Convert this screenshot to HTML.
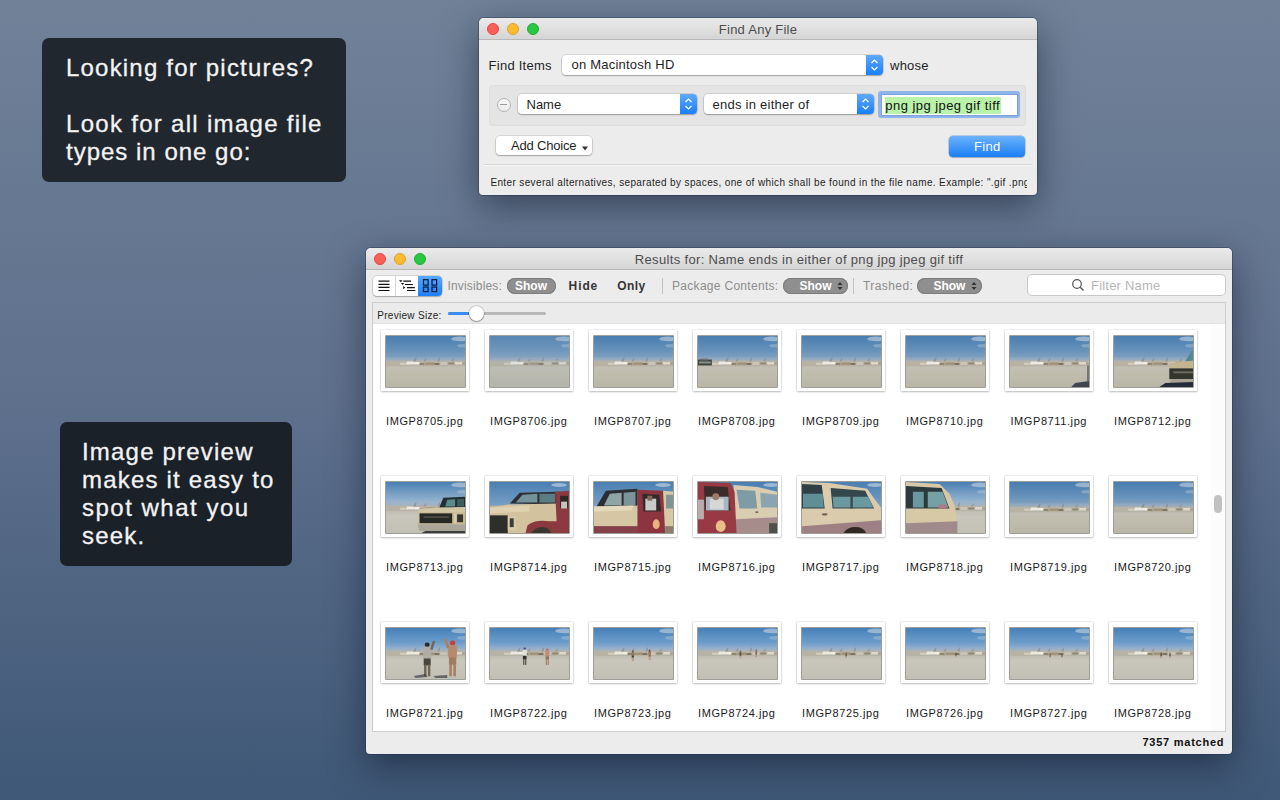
<!DOCTYPE html>
<html><head><meta charset="utf-8">
<style>
*{margin:0;padding:0;box-sizing:border-box}
html,body{width:1280px;height:800px;overflow:hidden}
body{position:relative;font-family:"Liberation Sans",sans-serif;background:linear-gradient(180deg,#708198 0%,#5e708c 50%,#3f5877 100%)}
.a{position:absolute}
.t{position:absolute;white-space:nowrap;line-height:1}
.callout{position:absolute;background:#21272e;border-radius:7px;color:#f4f4f4;font-size:24px;letter-spacing:1px}
.callout .t{color:#f2f2f2}
.win{position:absolute;background:#ececec;border-radius:5px 5px 4px 4px;box-shadow:0 0 0 1px rgba(30,40,60,.35),0 12px 36px rgba(10,18,35,.5)}
.tb{position:absolute;left:0;top:0;right:0;height:22px;border-radius:5px 5px 0 0;background:linear-gradient(#ebebeb,#d5d5d5);border-bottom:1px solid #b8b8b8}
.tl{position:absolute;width:12px;height:12px;border-radius:50%}
.r{background:#fc5f57;border:1px solid #df4744}
.y{background:#fdbc2e;border:1px solid #de9f34}
.g{background:#28c840;border:1px solid #27aa35}
.popup{position:absolute;background:#fff;border-radius:4px;box-shadow:0 0 0 .5px rgba(0,0,0,.18),0 1px 1.5px rgba(0,0,0,.25)}
.step{position:absolute;top:0;bottom:0;right:0;width:17px;background:linear-gradient(#5fa9fd,#1a7efb);border-radius:0 4px 4px 0}
</style></head><body>

<!-- callout 1 -->
<div class="callout" style="left:42px;top:38px;width:304px;height:144px"></div>
<div class="t" style="left:66px;top:56px;font-size:24px;letter-spacing:1.2px;color:#f3f3f3;-webkit-text-stroke:.3px #f3f3f3">Looking for pictures?</div>
<div class="t" style="left:66px;top:111.5px;font-size:24px;letter-spacing:1.3px;color:#f3f3f3;-webkit-text-stroke:.3px #f3f3f3">Look for all image file</div>
<div class="t" style="left:66px;top:140.3px;font-size:24px;letter-spacing:1px;color:#f3f3f3;-webkit-text-stroke:.3px #f3f3f3">types in one go:</div>

<!-- callout 2 -->
<div class="callout" style="left:60px;top:422px;width:232px;height:144px;background:#1b2129"></div>
<div class="t" style="left:82px;top:440px;font-size:24px;letter-spacing:1.2px;color:#f3f3f3;-webkit-text-stroke:.3px #f3f3f3">Image preview</div>
<div class="t" style="left:82px;top:468px;font-size:24px;letter-spacing:1.2px;color:#f3f3f3;-webkit-text-stroke:.3px #f3f3f3">makes it easy to</div>
<div class="t" style="left:82px;top:496px;font-size:24px;letter-spacing:1.5px;color:#f3f3f3;-webkit-text-stroke:.3px #f3f3f3">spot what you</div>
<div class="t" style="left:82px;top:524px;font-size:24px;letter-spacing:1.2px;color:#f3f3f3;-webkit-text-stroke:.3px #f3f3f3">seek.</div>

<!-- WINDOW 1 -->
<div class="win" id="w1" style="left:479px;top:18px;width:558px;height:177px">
  <div class="tb"></div>
  <div class="tl r" style="left:8px;top:5px"></div>
  <div class="tl y" style="left:28px;top:5px"></div>
  <div class="tl g" style="left:48px;top:5px"></div>
  <div class="t" style="left:0;width:558px;text-align:center;top:4.8px;font-size:13px;letter-spacing:.25px;color:#4d4d4d">Find Any File</div>
</div>


<!-- W1 content -->
<div class="t" style="left:488.6px;top:58.5px;font-size:13px;letter-spacing:.25px;color:#1f1f1f">Find Items</div>
<div class="popup" style="left:562px;top:54.5px;width:321px;height:20px"><div class="step"><svg width="17" height="20" style="position:absolute;left:0;top:0"><path d="M5.5 8 L8.5 5 L11.5 8 M5.5 12 L8.5 15 L11.5 12" fill="none" stroke="#fff" stroke-width="1.2"/></svg></div></div>
<div class="t" style="left:571.5px;top:58px;font-size:13px;letter-spacing:.22px;color:#1f1f1f">on Macintosh HD</div>
<div class="t" style="left:890px;top:58.8px;font-size:13px;letter-spacing:.25px;color:#1f1f1f">whose</div>
<div class="a" style="left:489px;top:85px;width:537px;height:41px;background:#e4e4e4;border:1px solid #dedede;border-radius:3px"></div>
<div class="a" style="left:496.7px;top:97.5px;width:14px;height:14px;border-radius:50%;border:1px solid #b4b4b4;background:linear-gradient(#f8f8f8,#ececec)"><div class="a" style="left:2.5px;top:5.6px;width:7px;height:1.4px;background:#999"></div></div>
<div class="popup" style="left:518px;top:94px;width:179px;height:20px"><div class="step"><svg width="17" height="20" style="position:absolute;left:0;top:0"><path d="M5.5 8 L8.5 5 L11.5 8 M5.5 12 L8.5 15 L11.5 12" fill="none" stroke="#fff" stroke-width="1.2"/></svg></div></div>
<div class="t" style="left:526.5px;top:97.5px;font-size:13px;color:#1f1f1f">Name</div>
<div class="popup" style="left:704px;top:94px;width:170px;height:20px"><div class="step"><svg width="17" height="20" style="position:absolute;left:0;top:0"><path d="M5.5 8 L8.5 5 L11.5 8 M5.5 12 L8.5 15 L11.5 12" fill="none" stroke="#fff" stroke-width="1.2"/></svg></div></div>
<div class="t" style="left:712.5px;top:97.5px;font-size:13px;letter-spacing:.26px;color:#1f1f1f">ends in either of</div>
<div class="a" style="left:878px;top:91px;width:142px;height:27px;border-radius:3px;background:#8fb4ec"></div>
<div class="a" style="left:882px;top:95px;width:135px;height:20px;background:#fff;box-shadow:0 0 0 .5px #6d8fc4"></div>
<div class="a" style="left:884.5px;top:96.5px;width:116.5px;height:17px;background:#b9f2a9"></div>
<div class="t" style="left:885.3px;top:98.7px;font-size:13px;letter-spacing:.45px;color:#111">png jpg jpeg gif tiff</div>
<div class="popup" style="left:496px;top:136px;width:96px;height:19px"></div>
<div class="t" style="left:511px;top:138.5px;font-size:13px;letter-spacing:-.2px;color:#1f1f1f">Add Choice</div>
<svg class="a" style="left:580px;top:144px" width="10" height="8"><path d="M2 2.5 L8 2.5 L5 6.5 Z" fill="#333"/></svg>
<div class="a" style="left:949px;top:136px;width:76px;height:21px;border-radius:4px;background:linear-gradient(#6cb3fa,#1b7ef6);box-shadow:0 0 0 .5px rgba(0,60,180,.4),0 1px 1px rgba(0,0,0,.15)"></div>
<div class="t" style="left:974px;top:140.4px;font-size:13px;letter-spacing:.35px;color:#fff">Find</div>
<div class="a" style="left:484px;top:164px;width:548px;height:1px;background:#d6d6d6"></div>
<div class="a" style="left:484px;top:165px;width:548px;height:1px;background:#f5f5f5"></div>
<div class="a" style="left:490px;top:176px;width:537px;height:14px;overflow:hidden"><div class="t" style="left:0.4px;top:2px;font-size:10px;letter-spacing:.37px;color:#1f1f1f">Enter several alternatives, separated by spaces, one of which shall be found in the file name. Example: ".gif .png"</div></div>

<!-- WINDOW 2 -->
<div class="win" id="w2" style="left:366px;top:248px;width:866px;height:506px">
  <div class="tb"></div>
  <div class="tl r" style="left:8px;top:5px"></div>
  <div class="tl y" style="left:28px;top:5px"></div>
  <div class="tl g" style="left:48px;top:5px"></div>
  <div class="t" style="left:0;width:866px;text-align:center;top:4.9px;font-size:13px;letter-spacing:.34px;color:#4d4d4d">Results for: Name ends in either of png jpg jpeg gif tiff</div>
</div>


<!-- W2 content -->
<div class="a" style="left:373px;top:276px;width:69px;height:20px;border-radius:4px;background:#fff;box-shadow:0 0 0 .5px rgba(0,0,0,.2),0 1px 1.5px rgba(0,0,0,.22);overflow:hidden">
  <div class="a" style="left:22px;top:0;width:1px;height:20px;background:#d4d4d4"></div>
  <div class="a" style="left:45px;top:0;width:24px;height:20px;background:linear-gradient(#5aa8fd,#1b7ffb)"></div>
</div>
<svg class="a" style="left:373px;top:276px" width="69" height="20">
  <path d="M5.5 5.2h11M5.5 8.3h11M5.5 11.4h11M5.5 14.5h11" stroke="#111" stroke-width="1.2"/>
  <path d="M26 4.3h3.6l-1.8 1.9z M28 7h3.2l-1.6 1.9z M30.2 10v3.2l2 -1.6z" fill="#111"/>
  <path d="M30.3 5.2h7.7M32 8.5h7.8M34 11.6h7.8M34 14.5h8.4" stroke="#111" stroke-width="1.2"/>
  <rect x="50.5" y="3.7" width="4.6" height="5.4" fill="none" stroke="#0b1736" stroke-width="1.2"/>
  <rect x="59" y="3.7" width="4.6" height="5.4" fill="none" stroke="#0b1736" stroke-width="1.2"/>
  <rect x="50.5" y="11" width="4.6" height="4.6" fill="none" stroke="#0b1736" stroke-width="1.2"/>
  <rect x="59" y="11" width="4.6" height="4.6" fill="none" stroke="#0b1736" stroke-width="1.2"/>
</svg>
<div class="t" style="left:447.5px;top:279.5px;font-size:12px;letter-spacing:.16px;color:#8d8d8d">Invisibles:</div>
<div class="a" style="left:507px;top:278px;width:49px;height:16px;border-radius:8px;background:#8f8f8f;box-shadow:inset 0 0 0 1px #7c7c7c"></div>
<div class="t" style="left:515px;top:279.5px;font-size:12px;font-weight:bold;color:#fff">Show</div>
<div class="t" style="left:568.6px;top:279.5px;font-size:12px;font-weight:bold;letter-spacing:.9px;color:#353535">Hide</div>
<div class="t" style="left:617.2px;top:279.5px;font-size:12px;font-weight:bold;letter-spacing:.4px;color:#353535">Only</div>
<div class="a" style="left:662px;top:278px;width:1px;height:16px;background:#c3c3c3"></div>
<div class="t" style="left:672px;top:279.5px;font-size:12px;letter-spacing:.3px;color:#8d8d8d">Package Contents:</div>
<div class="a" style="left:783px;top:278px;width:65px;height:16px;border-radius:8px;background:#8f8f8f;box-shadow:inset 0 0 0 1px #7c7c7c"></div>
<div class="t" style="left:799.5px;top:279.5px;font-size:12px;font-weight:bold;color:#fff">Show</div>
<svg class="a" style="left:836px;top:280px" width="8" height="12"><path d="M1.5 5L4 2L6.5 5Z M1.5 7L4 10L6.5 7Z" fill="#333"/></svg>
<div class="a" style="left:853px;top:278px;width:1px;height:16px;background:#c3c3c3"></div>
<div class="t" style="left:863px;top:279.5px;font-size:12px;letter-spacing:.42px;color:#8d8d8d">Trashed:</div>
<div class="a" style="left:917px;top:278px;width:65px;height:16px;border-radius:8px;background:#8f8f8f;box-shadow:inset 0 0 0 1px #7c7c7c"></div>
<div class="t" style="left:933.4px;top:279.5px;font-size:12px;font-weight:bold;color:#fff">Show</div>
<svg class="a" style="left:970px;top:280px" width="8" height="12"><path d="M1.5 5L4 2L6.5 5Z M1.5 7L4 10L6.5 7Z" fill="#333"/></svg>
<div class="a" style="left:1028px;top:275px;width:197px;height:20px;border-radius:4px;background:#fff;box-shadow:0 0 0 1px #c9c9c9"></div>
<svg class="a" style="left:1071px;top:278px" width="14" height="14"><circle cx="6" cy="6" r="4.3" fill="none" stroke="#555" stroke-width="1.2"/><path d="M9.2 9.2L12.5 12.5" stroke="#555" stroke-width="1.4"/></svg>
<div class="t" style="left:1091px;top:278.8px;font-size:13px;letter-spacing:.2px;color:#b6b6b6">Filter Name</div>
<!-- content box -->
<div class="a" style="left:373px;top:303px;width:852px;height:428px;background:#fff;box-shadow:0 0 0 1px #cdcdcd"></div>
<div class="a" style="left:373px;top:303px;width:852px;height:21px;background:#ebebeb;border-bottom:1px solid #e2e2e2"></div>
<div class="t" style="left:377.2px;top:311px;font-size:10px;letter-spacing:.3px;color:#262626">Preview Size:</div>
<div class="a" style="left:448px;top:312px;width:98px;height:3px;border-radius:1.5px;background:#b8b8b8"></div>
<div class="a" style="left:448px;top:312px;width:26px;height:3px;border-radius:1.5px;background:#3a8df6"></div>
<div class="a" style="left:469px;top:306px;width:15px;height:15px;border-radius:50%;background:#fff;box-shadow:0 0 0 .5px rgba(0,0,0,.25),0 1px 1.5px rgba(0,0,0,.3)"></div>
<div class="a" style="left:1211px;top:324px;width:14px;height:407px;background:#fcfcfc"></div>
<div class="a" style="left:1214px;top:495px;width:8px;height:18px;border-radius:4px;background:#c2c2c2"></div>
<div class="t" style="left:1142.5px;top:737px;font-size:11px;font-weight:bold;letter-spacing:.75px;color:#111">7357 matched</div>

<!-- GRID -->
<svg width="0" height="0" style="position:absolute"><defs>
<linearGradient id="sky" x1="0" y1="0" x2="0" y2="1"><stop offset="0" stop-color="#4a7db0"/><stop offset=".6" stop-color="#6893bb"/><stop offset="1" stop-color="#8ea8c2"/></linearGradient>
<linearGradient id="sky2" x1="0" y1="0" x2="0" y2="1"><stop offset="0" stop-color="#4a7fb3"/><stop offset=".5" stop-color="#7ba2c6"/><stop offset="1" stop-color="#a9bfd2"/></linearGradient>
<linearGradient id="sky3" x1="0" y1="0" x2="0" y2="1"><stop offset="0" stop-color="#4680b8"/><stop offset=".6" stop-color="#6a9cca"/><stop offset="1" stop-color="#a4b9d2"/></linearGradient>
<linearGradient id="gnd" x1="0" y1="0" x2="0" y2="1"><stop offset="0" stop-color="#c3bfb0"/><stop offset="1" stop-color="#b9b6a8"/></linearGradient>
<linearGradient id="gnd3" x1="0" y1="0" x2="0" y2="1"><stop offset="0" stop-color="#cac8bd"/><stop offset="1" stop-color="#c2c0b5"/></linearGradient>
</defs></svg>
<div class="a" style="left:380.5px;top:330px;width:88.5px;height:61px;background:#fff;box-shadow:0 0 0 .5px rgba(0,0,0,.12),0 1px 2px rgba(0,0,0,.22)"></div>
<svg class="a" style="left:385.5px;top:335.5px;box-shadow:0 0 0 .7px #74746e;filter:blur(.4px)" width="79" height="51" viewBox="0 0 80 52" preserveAspectRatio="none"><rect width="80" height="52" fill="url(#gnd)"/><rect width="80" height="26" fill="url(#sky)"/><ellipse cx="75" cy="3" rx="9" ry="2.4" fill="#dde5ec" opacity=".5"/><ellipse cx="77" cy="10" rx="5" ry="1.8" fill="#d8e0e8" opacity=".3"/><rect x="0" y="22" width="80" height="4" fill="#9fafc2" opacity=".55"/><rect x="0" y="25" width="80" height="6" fill="#b7b2a3"/><rect x="14" y="27" width="8" height="2.5" fill="#cfc9bc"/><rect x="21" y="26" width="8" height="3" fill="#ece9e2"/><rect x="29" y="26.5" width="5" height="2.5" fill="#f1eee8"/><rect x="34" y="27.5" width="5" height="2" fill="#8d8170"/><rect x="40" y="27" width="9" height="2.5" fill="#a3927a"/><rect x="49" y="27.5" width="5" height="2" fill="#7c7262"/><rect x="55" y="26.5" width="7" height="3" fill="#c9c3b8"/><rect x="63" y="27" width="6" height="2" fill="#8f8676"/><rect x="70" y="26.5" width="7" height="2.5" fill="#dcd8d0"/><rect x="77" y="27" width="3" height="2" fill="#a89e8e"/><path d="M27 26 l3 -4 l1 0 l-1 4Z M38 26 l2 -3 l1 0 l-1 3Z M52 26 l2 -4 l1 0 l-1 4Z M66 26 l2 -3 l1 0 l-1 3Z" fill="#6f6c68" opacity=".4"/><rect x="0" y="31" width="80" height="4" fill="#c3c2b8" opacity=".7"/><rect x="0" y="35" width="80" height="17" fill="url(#gnd)" opacity=".85"/></svg>
<div class="t" style="left:364.75px;width:120px;text-align:center;top:415.7px;font-size:11px;letter-spacing:.6px;color:#1a1a1a">IMGP8705.jpg</div>
<div class="a" style="left:484.5px;top:330px;width:88.5px;height:61px;background:#fff;box-shadow:0 0 0 .5px rgba(0,0,0,.12),0 1px 2px rgba(0,0,0,.22)"></div>
<svg class="a" style="left:489.5px;top:335.5px;box-shadow:0 0 0 .7px #74746e;filter:blur(.4px)" width="79" height="51" viewBox="0 0 80 52" preserveAspectRatio="none"><rect width="80" height="52" fill="url(#gnd)"/><rect width="80" height="26" fill="url(#sky)"/><ellipse cx="75" cy="3" rx="9" ry="2.4" fill="#dde5ec" opacity=".5"/><ellipse cx="77" cy="10" rx="5" ry="1.8" fill="#d8e0e8" opacity=".3"/><rect x="0" y="22" width="80" height="4" fill="#9fafc2" opacity=".55"/><rect x="0" y="25" width="80" height="6" fill="#b7b2a3"/><rect x="14" y="27" width="8" height="2.5" fill="#cfc9bc"/><rect x="21" y="26" width="8" height="3" fill="#ece9e2"/><rect x="29" y="26.5" width="5" height="2.5" fill="#f1eee8"/><rect x="34" y="27.5" width="5" height="2" fill="#8d8170"/><rect x="40" y="27" width="9" height="2.5" fill="#a3927a"/><rect x="49" y="27.5" width="5" height="2" fill="#7c7262"/><rect x="55" y="26.5" width="7" height="3" fill="#c9c3b8"/><rect x="63" y="27" width="6" height="2" fill="#8f8676"/><rect x="70" y="26.5" width="7" height="2.5" fill="#dcd8d0"/><rect x="77" y="27" width="3" height="2" fill="#a89e8e"/><path d="M27 26 l3 -4 l1 0 l-1 4Z M38 26 l2 -3 l1 0 l-1 3Z M52 26 l2 -4 l1 0 l-1 4Z M66 26 l2 -3 l1 0 l-1 3Z" fill="#6f6c68" opacity=".4"/><rect x="0" y="31" width="80" height="4" fill="#c3c2b8" opacity=".7"/><rect x="0" y="35" width="80" height="17" fill="url(#gnd)" opacity=".85"/><rect width="80" height="52" fill="#9fb0c0" opacity=".18"/></svg>
<div class="t" style="left:468.75px;width:120px;text-align:center;top:415.7px;font-size:11px;letter-spacing:.6px;color:#1a1a1a">IMGP8706.jpg</div>
<div class="a" style="left:588.5px;top:330px;width:88.5px;height:61px;background:#fff;box-shadow:0 0 0 .5px rgba(0,0,0,.12),0 1px 2px rgba(0,0,0,.22)"></div>
<svg class="a" style="left:593.5px;top:335.5px;box-shadow:0 0 0 .7px #74746e;filter:blur(.4px)" width="79" height="51" viewBox="0 0 80 52" preserveAspectRatio="none"><rect width="80" height="52" fill="url(#gnd)"/><rect width="80" height="26" fill="url(#sky)"/><ellipse cx="75" cy="3" rx="9" ry="2.4" fill="#dde5ec" opacity=".5"/><ellipse cx="77" cy="10" rx="5" ry="1.8" fill="#d8e0e8" opacity=".3"/><rect x="0" y="22" width="80" height="4" fill="#9fafc2" opacity=".55"/><rect x="0" y="25" width="80" height="6" fill="#b7b2a3"/><rect x="14" y="27" width="8" height="2.5" fill="#cfc9bc"/><rect x="21" y="26" width="8" height="3" fill="#ece9e2"/><rect x="29" y="26.5" width="5" height="2.5" fill="#f1eee8"/><rect x="34" y="27.5" width="5" height="2" fill="#8d8170"/><rect x="40" y="27" width="9" height="2.5" fill="#a3927a"/><rect x="49" y="27.5" width="5" height="2" fill="#7c7262"/><rect x="55" y="26.5" width="7" height="3" fill="#c9c3b8"/><rect x="63" y="27" width="6" height="2" fill="#8f8676"/><rect x="70" y="26.5" width="7" height="2.5" fill="#dcd8d0"/><rect x="77" y="27" width="3" height="2" fill="#a89e8e"/><path d="M27 26 l3 -4 l1 0 l-1 4Z M38 26 l2 -3 l1 0 l-1 3Z M52 26 l2 -4 l1 0 l-1 4Z M66 26 l2 -3 l1 0 l-1 3Z" fill="#6f6c68" opacity=".4"/><rect x="0" y="31" width="80" height="4" fill="#c3c2b8" opacity=".7"/><rect x="0" y="35" width="80" height="17" fill="url(#gnd)" opacity=".85"/></svg>
<div class="t" style="left:572.75px;width:120px;text-align:center;top:415.7px;font-size:11px;letter-spacing:.6px;color:#1a1a1a">IMGP8707.jpg</div>
<div class="a" style="left:692.5px;top:330px;width:88.5px;height:61px;background:#fff;box-shadow:0 0 0 .5px rgba(0,0,0,.12),0 1px 2px rgba(0,0,0,.22)"></div>
<svg class="a" style="left:697.5px;top:335.5px;box-shadow:0 0 0 .7px #74746e;filter:blur(.4px)" width="79" height="51" viewBox="0 0 80 52" preserveAspectRatio="none"><rect width="80" height="52" fill="url(#gnd)"/><rect width="80" height="26" fill="url(#sky)"/><ellipse cx="75" cy="3" rx="9" ry="2.4" fill="#dde5ec" opacity=".5"/><ellipse cx="77" cy="10" rx="5" ry="1.8" fill="#d8e0e8" opacity=".3"/><rect x="0" y="22" width="80" height="4" fill="#9fafc2" opacity=".55"/><rect x="0" y="25" width="80" height="6" fill="#b7b2a3"/><rect x="14" y="27" width="8" height="2.5" fill="#cfc9bc"/><rect x="21" y="26" width="8" height="3" fill="#ece9e2"/><rect x="29" y="26.5" width="5" height="2.5" fill="#f1eee8"/><rect x="34" y="27.5" width="5" height="2" fill="#8d8170"/><rect x="40" y="27" width="9" height="2.5" fill="#a3927a"/><rect x="49" y="27.5" width="5" height="2" fill="#7c7262"/><rect x="55" y="26.5" width="7" height="3" fill="#c9c3b8"/><rect x="63" y="27" width="6" height="2" fill="#8f8676"/><rect x="70" y="26.5" width="7" height="2.5" fill="#dcd8d0"/><rect x="77" y="27" width="3" height="2" fill="#a89e8e"/><path d="M27 26 l3 -4 l1 0 l-1 4Z M38 26 l2 -3 l1 0 l-1 3Z M52 26 l2 -4 l1 0 l-1 4Z M66 26 l2 -3 l1 0 l-1 3Z" fill="#6f6c68" opacity=".4"/><rect x="0" y="31" width="80" height="4" fill="#c3c2b8" opacity=".7"/><rect x="0" y="35" width="80" height="17" fill="url(#gnd)" opacity=".85"/><rect x="0" y="24" width="14" height="6" fill="#3e4440"/><rect x="2" y="23" width="8" height="2" fill="#6a7070"/><rect x="1" y="26" width="12" height="2" fill="#8a8e88"/></svg>
<div class="t" style="left:676.75px;width:120px;text-align:center;top:415.7px;font-size:11px;letter-spacing:.6px;color:#1a1a1a">IMGP8708.jpg</div>
<div class="a" style="left:796.5px;top:330px;width:88.5px;height:61px;background:#fff;box-shadow:0 0 0 .5px rgba(0,0,0,.12),0 1px 2px rgba(0,0,0,.22)"></div>
<svg class="a" style="left:801.5px;top:335.5px;box-shadow:0 0 0 .7px #74746e;filter:blur(.4px)" width="79" height="51" viewBox="0 0 80 52" preserveAspectRatio="none"><rect width="80" height="52" fill="url(#gnd)"/><rect width="80" height="26" fill="url(#sky)"/><ellipse cx="75" cy="3" rx="9" ry="2.4" fill="#dde5ec" opacity=".5"/><ellipse cx="77" cy="10" rx="5" ry="1.8" fill="#d8e0e8" opacity=".3"/><rect x="0" y="22" width="80" height="4" fill="#9fafc2" opacity=".55"/><rect x="0" y="25" width="80" height="6" fill="#b7b2a3"/><rect x="14" y="27" width="8" height="2.5" fill="#cfc9bc"/><rect x="21" y="26" width="8" height="3" fill="#ece9e2"/><rect x="29" y="26.5" width="5" height="2.5" fill="#f1eee8"/><rect x="34" y="27.5" width="5" height="2" fill="#8d8170"/><rect x="40" y="27" width="9" height="2.5" fill="#a3927a"/><rect x="49" y="27.5" width="5" height="2" fill="#7c7262"/><rect x="55" y="26.5" width="7" height="3" fill="#c9c3b8"/><rect x="63" y="27" width="6" height="2" fill="#8f8676"/><rect x="70" y="26.5" width="7" height="2.5" fill="#dcd8d0"/><rect x="77" y="27" width="3" height="2" fill="#a89e8e"/><path d="M27 26 l3 -4 l1 0 l-1 4Z M38 26 l2 -3 l1 0 l-1 3Z M52 26 l2 -4 l1 0 l-1 4Z M66 26 l2 -3 l1 0 l-1 3Z" fill="#6f6c68" opacity=".4"/><rect x="0" y="31" width="80" height="4" fill="#c3c2b8" opacity=".7"/><rect x="0" y="35" width="80" height="17" fill="url(#gnd)" opacity=".85"/></svg>
<div class="t" style="left:780.75px;width:120px;text-align:center;top:415.7px;font-size:11px;letter-spacing:.6px;color:#1a1a1a">IMGP8709.jpg</div>
<div class="a" style="left:900.5px;top:330px;width:88.5px;height:61px;background:#fff;box-shadow:0 0 0 .5px rgba(0,0,0,.12),0 1px 2px rgba(0,0,0,.22)"></div>
<svg class="a" style="left:905.5px;top:335.5px;box-shadow:0 0 0 .7px #74746e;filter:blur(.4px)" width="79" height="51" viewBox="0 0 80 52" preserveAspectRatio="none"><rect width="80" height="52" fill="url(#gnd)"/><rect width="80" height="26" fill="url(#sky)"/><ellipse cx="75" cy="3" rx="9" ry="2.4" fill="#dde5ec" opacity=".5"/><ellipse cx="77" cy="10" rx="5" ry="1.8" fill="#d8e0e8" opacity=".3"/><rect x="0" y="22" width="80" height="4" fill="#9fafc2" opacity=".55"/><rect x="0" y="25" width="80" height="6" fill="#b7b2a3"/><rect x="14" y="27" width="8" height="2.5" fill="#cfc9bc"/><rect x="21" y="26" width="8" height="3" fill="#ece9e2"/><rect x="29" y="26.5" width="5" height="2.5" fill="#f1eee8"/><rect x="34" y="27.5" width="5" height="2" fill="#8d8170"/><rect x="40" y="27" width="9" height="2.5" fill="#a3927a"/><rect x="49" y="27.5" width="5" height="2" fill="#7c7262"/><rect x="55" y="26.5" width="7" height="3" fill="#c9c3b8"/><rect x="63" y="27" width="6" height="2" fill="#8f8676"/><rect x="70" y="26.5" width="7" height="2.5" fill="#dcd8d0"/><rect x="77" y="27" width="3" height="2" fill="#a89e8e"/><path d="M27 26 l3 -4 l1 0 l-1 4Z M38 26 l2 -3 l1 0 l-1 3Z M52 26 l2 -4 l1 0 l-1 4Z M66 26 l2 -3 l1 0 l-1 3Z" fill="#6f6c68" opacity=".4"/><rect x="0" y="31" width="80" height="4" fill="#c3c2b8" opacity=".7"/><rect x="0" y="35" width="80" height="17" fill="url(#gnd)" opacity=".85"/></svg>
<div class="t" style="left:884.75px;width:120px;text-align:center;top:415.7px;font-size:11px;letter-spacing:.6px;color:#1a1a1a">IMGP8710.jpg</div>
<div class="a" style="left:1004.5px;top:330px;width:88.5px;height:61px;background:#fff;box-shadow:0 0 0 .5px rgba(0,0,0,.12),0 1px 2px rgba(0,0,0,.22)"></div>
<svg class="a" style="left:1009.5px;top:335.5px;box-shadow:0 0 0 .7px #74746e;filter:blur(.4px)" width="79" height="51" viewBox="0 0 80 52" preserveAspectRatio="none"><rect width="80" height="52" fill="url(#gnd)"/><rect width="80" height="26" fill="url(#sky)"/><ellipse cx="75" cy="3" rx="9" ry="2.4" fill="#dde5ec" opacity=".5"/><ellipse cx="77" cy="10" rx="5" ry="1.8" fill="#d8e0e8" opacity=".3"/><rect x="0" y="22" width="80" height="4" fill="#9fafc2" opacity=".55"/><rect x="0" y="25" width="80" height="6" fill="#b7b2a3"/><rect x="14" y="27" width="8" height="2.5" fill="#cfc9bc"/><rect x="21" y="26" width="8" height="3" fill="#ece9e2"/><rect x="29" y="26.5" width="5" height="2.5" fill="#f1eee8"/><rect x="34" y="27.5" width="5" height="2" fill="#8d8170"/><rect x="40" y="27" width="9" height="2.5" fill="#a3927a"/><rect x="49" y="27.5" width="5" height="2" fill="#7c7262"/><rect x="55" y="26.5" width="7" height="3" fill="#c9c3b8"/><rect x="63" y="27" width="6" height="2" fill="#8f8676"/><rect x="70" y="26.5" width="7" height="2.5" fill="#dcd8d0"/><rect x="77" y="27" width="3" height="2" fill="#a89e8e"/><path d="M27 26 l3 -4 l1 0 l-1 4Z M38 26 l2 -3 l1 0 l-1 3Z M52 26 l2 -4 l1 0 l-1 4Z M66 26 l2 -3 l1 0 l-1 3Z" fill="#6f6c68" opacity=".4"/><rect x="0" y="31" width="80" height="4" fill="#c3c2b8" opacity=".7"/><rect x="0" y="35" width="80" height="17" fill="url(#gnd)" opacity=".85"/><path d="M66 48 L80 46 L80 52 L62 52Z" fill="#2c3140" opacity=".85"/><rect x="78" y="30" width="2" height="16" fill="#555" opacity=".7"/></svg>
<div class="t" style="left:988.75px;width:120px;text-align:center;top:415.7px;font-size:11px;letter-spacing:.6px;color:#1a1a1a">IMGP8711.jpg</div>
<div class="a" style="left:1108.5px;top:330px;width:88.5px;height:61px;background:#fff;box-shadow:0 0 0 .5px rgba(0,0,0,.12),0 1px 2px rgba(0,0,0,.22)"></div>
<svg class="a" style="left:1113.5px;top:335.5px;box-shadow:0 0 0 .7px #74746e;filter:blur(.4px)" width="79" height="51" viewBox="0 0 80 52" preserveAspectRatio="none"><rect width="80" height="52" fill="url(#gnd)"/><rect width="80" height="26" fill="url(#sky)"/><ellipse cx="75" cy="3" rx="9" ry="2.4" fill="#dde5ec" opacity=".5"/><ellipse cx="77" cy="10" rx="5" ry="1.8" fill="#d8e0e8" opacity=".3"/><rect x="0" y="22" width="80" height="4" fill="#9fafc2" opacity=".55"/><rect x="0" y="25" width="80" height="6" fill="#b7b2a3"/><rect x="14" y="27" width="8" height="2.5" fill="#cfc9bc"/><rect x="21" y="26" width="8" height="3" fill="#ece9e2"/><rect x="29" y="26.5" width="5" height="2.5" fill="#f1eee8"/><rect x="34" y="27.5" width="5" height="2" fill="#8d8170"/><rect x="40" y="27" width="9" height="2.5" fill="#a3927a"/><rect x="49" y="27.5" width="5" height="2" fill="#7c7262"/><rect x="55" y="26.5" width="7" height="3" fill="#c9c3b8"/><rect x="63" y="27" width="6" height="2" fill="#8f8676"/><rect x="70" y="26.5" width="7" height="2.5" fill="#dcd8d0"/><rect x="77" y="27" width="3" height="2" fill="#a89e8e"/><path d="M27 26 l3 -4 l1 0 l-1 4Z M38 26 l2 -3 l1 0 l-1 3Z M52 26 l2 -4 l1 0 l-1 4Z M66 26 l2 -3 l1 0 l-1 3Z" fill="#6f6c68" opacity=".4"/><rect x="0" y="31" width="80" height="4" fill="#c3c2b8" opacity=".7"/><rect x="0" y="35" width="80" height="17" fill="url(#gnd)" opacity=".85"/><path d="M72 26 L78 16 L80 14 L80 26Z" fill="#4e8a90"/><path d="M56 28 L80 25 L80 33 L56 33Z" fill="#c4b48f"/><rect x="56" y="33" width="24" height="11" fill="#34352f"/><rect x="60" y="36" width="20" height="2" fill="#6e6a5c"/><rect x="57" y="44" width="23" height="4" fill="#a7a291"/><path d="M46 52 L52 48 L80 47 L80 52Z" fill="#262b38"/></svg>
<div class="t" style="left:1092.75px;width:120px;text-align:center;top:415.7px;font-size:11px;letter-spacing:.6px;color:#1a1a1a">IMGP8712.jpg</div>
<div class="a" style="left:380.5px;top:476px;width:88.5px;height:61px;background:#fff;box-shadow:0 0 0 .5px rgba(0,0,0,.12),0 1px 2px rgba(0,0,0,.22)"></div>
<svg class="a" style="left:385.5px;top:481.5px;box-shadow:0 0 0 .7px #74746e;filter:blur(.4px)" width="79" height="51" viewBox="0 0 80 52" preserveAspectRatio="none"><rect width="80" height="52" fill="url(#gnd3)"/><rect width="80" height="25" fill="url(#sky2)"/><ellipse cx="75" cy="3" rx="9" ry="2.4" fill="#dde5ec" opacity=".5"/><ellipse cx="77" cy="10" rx="5" ry="1.8" fill="#d8e0e8" opacity=".3"/><rect x="0" y="21" width="80" height="4" fill="#9fafc2" opacity=".55"/><rect x="0" y="24" width="80" height="6" fill="#b7b2a3"/><rect x="14" y="26" width="8" height="2.5" fill="#cfc9bc"/><rect x="21" y="25" width="8" height="3" fill="#ece9e2"/><rect x="29" y="25.5" width="5" height="2.5" fill="#f1eee8"/><rect x="34" y="26.5" width="5" height="2" fill="#8d8170"/><rect x="40" y="26" width="9" height="2.5" fill="#a3927a"/><rect x="49" y="26.5" width="5" height="2" fill="#7c7262"/><rect x="55" y="25.5" width="7" height="3" fill="#c9c3b8"/><rect x="63" y="26" width="6" height="2" fill="#8f8676"/><rect x="70" y="25.5" width="7" height="2.5" fill="#dcd8d0"/><rect x="77" y="26" width="3" height="2" fill="#a89e8e"/><path d="M27 25 l3 -4 l1 0 l-1 4Z M38 25 l2 -3 l1 0 l-1 3Z M52 25 l2 -4 l1 0 l-1 4Z M66 25 l2 -3 l1 0 l-1 3Z" fill="#6f6c68" opacity=".4"/><rect x="0" y="30" width="80" height="4" fill="#c3c2b8" opacity=".7"/><rect x="0" y="33" width="80" height="19" fill="url(#gnd3)" opacity=".85"/><path d="M54 26 L58 16 L80 15 L80 26Z" fill="#23302f"/><path d="M60 25 L62 18 L70 17.5 L70 25Z" fill="#5d8a8c"/><path d="M72 17.5 L79 17 L79 25 L72 25Z" fill="#3c5e60"/><path d="M33 27 L80 25.5 L80 31 L33 31Z" fill="#d3c6a6"/><rect x="33" y="31" width="47" height="12" fill="#c9b98f"/><rect x="34" y="32" width="33" height="10" fill="#262824"/><rect x="38" y="35" width="26" height="1.5" fill="#55524a"/><rect x="69" y="32" width="2" height="10" fill="#d6cdb6"/><rect x="72" y="33" width="6" height="8" fill="#353632"/><path d="M32 43 L80 43 L80 50 L34 50Z" fill="#aaa69a"/><path d="M36 52 L40 50 L80 50 L80 52Z" fill="#3a3c40"/></svg>
<div class="t" style="left:364.75px;width:120px;text-align:center;top:561.7px;font-size:11px;letter-spacing:.6px;color:#1a1a1a">IMGP8713.jpg</div>
<div class="a" style="left:484.5px;top:476px;width:88.5px;height:61px;background:#fff;box-shadow:0 0 0 .5px rgba(0,0,0,.12),0 1px 2px rgba(0,0,0,.22)"></div>
<svg class="a" style="left:489.5px;top:481.5px;box-shadow:0 0 0 .7px #74746e;filter:blur(.4px)" width="79" height="51" viewBox="0 0 80 52" preserveAspectRatio="none"><rect width="80" height="52" fill="url(#sky2)"/><ellipse cx="70" cy="3" rx="8" ry="2" fill="#e8eef3" opacity=".5"/><rect x="0" y="24" width="30" height="4" fill="#b6b1a2"/><path d="M20 22 L30 11 L70 10 L70 23Z" fill="#2a3036"/><path d="M26 21 L33 13 L48 12 L48 21Z" fill="#73929a"/><path d="M50 12 L66 12 L66 21 L50 21Z" fill="#5d7b82"/><path d="M0 26 L18 23 L70 22 L72 52 L0 52Z" fill="#d2c29d"/><path d="M0 26 L40 24 L40 30 L0 32Z" fill="#e0d2b0"/><rect x="0" y="34" width="18" height="18" fill="#2e2f2c"/><rect x="18" y="35" width="8" height="14" fill="#d8cca8"/><rect x="20" y="37" width="4" height="9" fill="#3b3c38"/><path d="M36 52 L38 44 Q46 38 60 40 L72 40 L72 52Z" fill="#8a3a3e"/><path d="M42 52 Q46 46 54 46 Q60 47 62 52Z" fill="#39352f"/><path d="M66 10 L80 9 L80 52 L68 52Z" fill="#8c3a42"/><rect x="71" y="14" width="8" height="12" fill="#2e2929"/><rect x="72" y="20" width="6" height="7" fill="#c8c4c0"/></svg>
<div class="t" style="left:468.75px;width:120px;text-align:center;top:561.7px;font-size:11px;letter-spacing:.6px;color:#1a1a1a">IMGP8714.jpg</div>
<div class="a" style="left:588.5px;top:476px;width:88.5px;height:61px;background:#fff;box-shadow:0 0 0 .5px rgba(0,0,0,.12),0 1px 2px rgba(0,0,0,.22)"></div>
<svg class="a" style="left:593.5px;top:481.5px;box-shadow:0 0 0 .7px #74746e;filter:blur(.4px)" width="79" height="51" viewBox="0 0 80 52" preserveAspectRatio="none"><rect width="80" height="52" fill="url(#sky2)"/><ellipse cx="70" cy="3" rx="8" ry="2" fill="#e8eef3" opacity=".5"/><path d="M2 26 L12 9 L44 7 L44 26Z" fill="#2b2f33"/><path d="M10 24 L16 12 L28 11 L28 24Z" fill="#8ea4a6"/><path d="M30 11 L42 10 L42 24 L30 24Z" fill="#7c9498"/><path d="M0 25 L46 24 L46 52 L0 52Z" fill="#d6c7a4"/><path d="M0 25 L40 24 L38 29 L0 30Z" fill="#e5d9bc"/><rect x="0" y="45" width="46" height="7" fill="#86404a"/><path d="M44 8 L70 9 L73 52 L44 52Z" fill="#8c3540"/><path d="M49 12 L66 13 L68 30 L50 30Z" fill="#33292a"/><rect x="52" y="17" width="11" height="12" fill="#c9cbc9"/><rect x="54" y="14" width="5" height="5" fill="#7c6a5c"/><ellipse cx="63" cy="43" rx="3.5" ry="5" fill="#e9b47a"/><path d="M70 9 L80 10 L80 52 L72 52Z" fill="#d7c8a6"/><rect x="73" y="13" width="7" height="14" fill="#7e9598"/><rect x="72" y="45" width="8" height="7" fill="#8f7b6e"/></svg>
<div class="t" style="left:572.75px;width:120px;text-align:center;top:561.7px;font-size:11px;letter-spacing:.6px;color:#1a1a1a">IMGP8715.jpg</div>
<div class="a" style="left:692.5px;top:476px;width:88.5px;height:61px;background:#fff;box-shadow:0 0 0 .5px rgba(0,0,0,.12),0 1px 2px rgba(0,0,0,.22)"></div>
<svg class="a" style="left:697.5px;top:481.5px;box-shadow:0 0 0 .7px #74746e;filter:blur(.4px)" width="79" height="51" viewBox="0 0 80 52" preserveAspectRatio="none"><rect width="80" height="52" fill="url(#sky2)"/><ellipse cx="74" cy="3" rx="8" ry="2" fill="#e8eef3" opacity=".5"/><path d="M36 3 L60 5 L80 10 L80 52 L38 52Z" fill="#d9cdb2"/><path d="M39 8 L58 9 L60 27 L42 27Z" fill="#7f9ba6"/><path d="M63 11 L80 13 L80 26 L64 26Z" fill="#8ba5b0"/><rect x="58" y="30" width="3" height="1.5" fill="#6a6256"/><path d="M38 38 L80 36 L80 52 L38 52Z" fill="#a68c8a"/><rect x="72" y="42" width="8" height="10" fill="#4e504c"/><path d="M0 0 L33 1 L37 10 L39 52 L0 52Z" fill="#983a44"/><path d="M6 4 L30 5 L33 29 L7 29Z" fill="#3a2c2a"/><rect x="8" y="15" width="23" height="14" fill="#a8b6c2"/><rect x="12" y="17" width="14" height="11" fill="#d6d8d8"/><ellipse cx="18" cy="15" rx="3.5" ry="3.5" fill="#9c7c68"/><rect x="0" y="18" width="6" height="20" fill="#c4c8c8" opacity=".8"/><ellipse cx="23" cy="45" rx="5" ry="6" fill="#e8bf8a"/></svg>
<div class="t" style="left:676.75px;width:120px;text-align:center;top:561.7px;font-size:11px;letter-spacing:.6px;color:#1a1a1a">IMGP8716.jpg</div>
<div class="a" style="left:796.5px;top:476px;width:88.5px;height:61px;background:#fff;box-shadow:0 0 0 .5px rgba(0,0,0,.12),0 1px 2px rgba(0,0,0,.22)"></div>
<svg class="a" style="left:801.5px;top:481.5px;box-shadow:0 0 0 .7px #74746e;filter:blur(.4px)" width="79" height="51" viewBox="0 0 80 52" preserveAspectRatio="none"><rect width="80" height="52" fill="url(#sky2)"/><ellipse cx="74" cy="3" rx="8" ry="2" fill="#e8eef3" opacity=".5"/><path d="M0 0 L28 1 L66 7 L74 18 L80 26 L80 52 L0 52Z" fill="#d9cbab"/><path d="M0 2 L20 3 L23 27 L0 27Z" fill="#2f4046"/><path d="M1 12 L21 12 L22 26 L1 26Z" fill="#5f8e96"/><path d="M29 6 L64 9 L73 27 L31 27Z" fill="#33474c"/><path d="M31 15 L67 15 L72 26 L32 26Z" fill="#6a9aa0"/><rect x="49" y="14" width="2.5" height="13" fill="#3c4c50"/><ellipse cx="23" cy="33" rx="3" ry="1.2" fill="#6c6050"/><path d="M0 45 L80 39 L80 52 L0 52Z" fill="#9d7f84"/><path d="M42 52 Q46 46 54 46 Q62 46 65 52Z" fill="#2f2a25"/></svg>
<div class="t" style="left:780.75px;width:120px;text-align:center;top:561.7px;font-size:11px;letter-spacing:.6px;color:#1a1a1a">IMGP8717.jpg</div>
<div class="a" style="left:900.5px;top:476px;width:88.5px;height:61px;background:#fff;box-shadow:0 0 0 .5px rgba(0,0,0,.12),0 1px 2px rgba(0,0,0,.22)"></div>
<svg class="a" style="left:905.5px;top:481.5px;box-shadow:0 0 0 .7px #74746e;filter:blur(.4px)" width="79" height="51" viewBox="0 0 80 52" preserveAspectRatio="none"><rect width="80" height="52" fill="url(#gnd3)"/><rect width="80" height="25" fill="url(#sky2)"/><ellipse cx="75" cy="3" rx="9" ry="2.4" fill="#dde5ec" opacity=".5"/><ellipse cx="77" cy="10" rx="5" ry="1.8" fill="#d8e0e8" opacity=".3"/><rect x="0" y="21" width="80" height="4" fill="#9fafc2" opacity=".55"/><rect x="0" y="24" width="80" height="6" fill="#b7b2a3"/><rect x="14" y="26" width="8" height="2.5" fill="#cfc9bc"/><rect x="21" y="25" width="8" height="3" fill="#ece9e2"/><rect x="29" y="25.5" width="5" height="2.5" fill="#f1eee8"/><rect x="34" y="26.5" width="5" height="2" fill="#8d8170"/><rect x="40" y="26" width="9" height="2.5" fill="#a3927a"/><rect x="49" y="26.5" width="5" height="2" fill="#7c7262"/><rect x="55" y="25.5" width="7" height="3" fill="#c9c3b8"/><rect x="63" y="26" width="6" height="2" fill="#8f8676"/><rect x="70" y="25.5" width="7" height="2.5" fill="#dcd8d0"/><rect x="77" y="26" width="3" height="2" fill="#a89e8e"/><path d="M27 25 l3 -4 l1 0 l-1 4Z M38 25 l2 -3 l1 0 l-1 3Z M52 25 l2 -4 l1 0 l-1 4Z M66 25 l2 -3 l1 0 l-1 3Z" fill="#6f6c68" opacity=".4"/><rect x="0" y="30" width="80" height="4" fill="#c3c2b8" opacity=".7"/><rect x="0" y="34" width="80" height="18" fill="url(#gnd3)" opacity=".85"/><path d="M0 0 L34 2 L44 12 L50 26 L52 52 L0 52Z" fill="#d8c9a6"/><path d="M0 4 L36 6 L44 27 L0 27Z" fill="#2c3a3e"/><path d="M7 10 L18 10 L18 26 L7 26Z" fill="#6a989e"/><path d="M22 10 L37 10 L43 26 L22 26Z" fill="#75a0a6"/><rect x="33" y="23" width="8" height="4" fill="#b07a7c"/><path d="M0 42 L52 40 L52 52 L0 52Z" fill="#a08a8c"/></svg>
<div class="t" style="left:884.75px;width:120px;text-align:center;top:561.7px;font-size:11px;letter-spacing:.6px;color:#1a1a1a">IMGP8718.jpg</div>
<div class="a" style="left:1004.5px;top:476px;width:88.5px;height:61px;background:#fff;box-shadow:0 0 0 .5px rgba(0,0,0,.12),0 1px 2px rgba(0,0,0,.22)"></div>
<svg class="a" style="left:1009.5px;top:481.5px;box-shadow:0 0 0 .7px #74746e;filter:blur(.4px)" width="79" height="51" viewBox="0 0 80 52" preserveAspectRatio="none"><rect width="80" height="52" fill="url(#gnd)"/><rect width="80" height="26" fill="url(#sky)"/><ellipse cx="75" cy="3" rx="9" ry="2.4" fill="#dde5ec" opacity=".5"/><ellipse cx="77" cy="10" rx="5" ry="1.8" fill="#d8e0e8" opacity=".3"/><rect x="0" y="22" width="80" height="4" fill="#9fafc2" opacity=".55"/><rect x="0" y="25" width="80" height="6" fill="#b7b2a3"/><rect x="14" y="27" width="8" height="2.5" fill="#cfc9bc"/><rect x="21" y="26" width="8" height="3" fill="#ece9e2"/><rect x="29" y="26.5" width="5" height="2.5" fill="#f1eee8"/><rect x="34" y="27.5" width="5" height="2" fill="#8d8170"/><rect x="40" y="27" width="9" height="2.5" fill="#a3927a"/><rect x="49" y="27.5" width="5" height="2" fill="#7c7262"/><rect x="55" y="26.5" width="7" height="3" fill="#c9c3b8"/><rect x="63" y="27" width="6" height="2" fill="#8f8676"/><rect x="70" y="26.5" width="7" height="2.5" fill="#dcd8d0"/><rect x="77" y="27" width="3" height="2" fill="#a89e8e"/><path d="M27 26 l3 -4 l1 0 l-1 4Z M38 26 l2 -3 l1 0 l-1 3Z M52 26 l2 -4 l1 0 l-1 4Z M66 26 l2 -3 l1 0 l-1 3Z" fill="#6f6c68" opacity=".4"/><rect x="0" y="31" width="80" height="4" fill="#c3c2b8" opacity=".7"/><rect x="0" y="35" width="80" height="17" fill="url(#gnd)" opacity=".85"/></svg>
<div class="t" style="left:988.75px;width:120px;text-align:center;top:561.7px;font-size:11px;letter-spacing:.6px;color:#1a1a1a">IMGP8719.jpg</div>
<div class="a" style="left:1108.5px;top:476px;width:88.5px;height:61px;background:#fff;box-shadow:0 0 0 .5px rgba(0,0,0,.12),0 1px 2px rgba(0,0,0,.22)"></div>
<svg class="a" style="left:1113.5px;top:481.5px;box-shadow:0 0 0 .7px #74746e;filter:blur(.4px)" width="79" height="51" viewBox="0 0 80 52" preserveAspectRatio="none"><rect width="80" height="52" fill="url(#gnd)"/><rect width="80" height="26" fill="url(#sky)"/><ellipse cx="75" cy="3" rx="9" ry="2.4" fill="#dde5ec" opacity=".5"/><ellipse cx="77" cy="10" rx="5" ry="1.8" fill="#d8e0e8" opacity=".3"/><rect x="0" y="22" width="80" height="4" fill="#9fafc2" opacity=".55"/><rect x="0" y="25" width="80" height="6" fill="#b7b2a3"/><rect x="14" y="27" width="8" height="2.5" fill="#cfc9bc"/><rect x="21" y="26" width="8" height="3" fill="#ece9e2"/><rect x="29" y="26.5" width="5" height="2.5" fill="#f1eee8"/><rect x="34" y="27.5" width="5" height="2" fill="#8d8170"/><rect x="40" y="27" width="9" height="2.5" fill="#a3927a"/><rect x="49" y="27.5" width="5" height="2" fill="#7c7262"/><rect x="55" y="26.5" width="7" height="3" fill="#c9c3b8"/><rect x="63" y="27" width="6" height="2" fill="#8f8676"/><rect x="70" y="26.5" width="7" height="2.5" fill="#dcd8d0"/><rect x="77" y="27" width="3" height="2" fill="#a89e8e"/><path d="M27 26 l3 -4 l1 0 l-1 4Z M38 26 l2 -3 l1 0 l-1 3Z M52 26 l2 -4 l1 0 l-1 4Z M66 26 l2 -3 l1 0 l-1 3Z" fill="#6f6c68" opacity=".4"/><rect x="0" y="31" width="80" height="4" fill="#c3c2b8" opacity=".7"/><rect x="0" y="35" width="80" height="17" fill="url(#gnd)" opacity=".85"/></svg>
<div class="t" style="left:1092.75px;width:120px;text-align:center;top:561.7px;font-size:11px;letter-spacing:.6px;color:#1a1a1a">IMGP8720.jpg</div>
<div class="a" style="left:380.5px;top:622px;width:88.5px;height:61px;background:#fff;box-shadow:0 0 0 .5px rgba(0,0,0,.12),0 1px 2px rgba(0,0,0,.22)"></div>
<svg class="a" style="left:385.5px;top:627.5px;box-shadow:0 0 0 .7px #74746e;filter:blur(.4px)" width="79" height="51" viewBox="0 0 80 52" preserveAspectRatio="none"><rect width="80" height="52" fill="url(#gnd3)"/><rect width="80" height="24" fill="url(#sky3)"/><ellipse cx="75" cy="3" rx="9" ry="2.4" fill="#dde5ec" opacity=".5"/><ellipse cx="77" cy="10" rx="5" ry="1.8" fill="#d8e0e8" opacity=".3"/><rect x="0" y="20" width="80" height="4" fill="#9fafc2" opacity=".55"/><rect x="0" y="23" width="80" height="6" fill="#b7b2a3"/><rect x="14" y="25" width="8" height="2.5" fill="#cfc9bc"/><rect x="21" y="24" width="8" height="3" fill="#ece9e2"/><rect x="29" y="24.5" width="5" height="2.5" fill="#f1eee8"/><rect x="34" y="25.5" width="5" height="2" fill="#8d8170"/><rect x="40" y="25" width="9" height="2.5" fill="#a3927a"/><rect x="49" y="25.5" width="5" height="2" fill="#7c7262"/><rect x="55" y="24.5" width="7" height="3" fill="#c9c3b8"/><rect x="63" y="25" width="6" height="2" fill="#8f8676"/><rect x="70" y="24.5" width="7" height="2.5" fill="#dcd8d0"/><rect x="77" y="25" width="3" height="2" fill="#a89e8e"/><path d="M27 24 l3 -4 l1 0 l-1 4Z M38 24 l2 -3 l1 0 l-1 3Z M52 24 l2 -4 l1 0 l-1 4Z M66 24 l2 -3 l1 0 l-1 3Z" fill="#6f6c68" opacity=".4"/><rect x="0" y="29" width="80" height="4" fill="#c3c2b8" opacity=".7"/><rect x="0" y="32" width="80" height="20" fill="url(#gnd3)" opacity=".85"/><ellipse cx="41.7" cy="17.1" rx="2.52" ry="2.275" fill="#2e2a26"/><rect x="37.5" y="19.2" width="8.4" height="12.6" rx="2.1" fill="#b0aea4"/><path d="M45.9 22.0 L48.7 13.25" stroke="#6e6656" stroke-width="2.52"/><rect x="38.172" y="31.1" width="7.056" height="7.0" fill="#45463c"/><rect x="38.508" y="37.400000000000006" width="2.52" height="11.9" fill="#6e6656"/><rect x="42.372" y="37.400000000000006" width="2.52" height="11.9" fill="#6e6656"/><ellipse cx="67.44" cy="15.219999999999999" rx="2.6639999999999997" ry="2.4050000000000002" fill="#c8403a"/><rect x="63" y="17.439999999999998" width="8.879999999999999" height="13.32" rx="2.2199999999999998" fill="#b78a6c"/><path d="M63 20.4 L60.04 11.15" stroke="#a88064" stroke-width="2.6639999999999997"/><rect x="63.7104" y="30.02" width="7.459199999999999" height="7.4" fill="#a27c60"/><rect x="64.0656" y="36.68" width="2.6639999999999997" height="12.58" fill="#a88064"/><rect x="68.1504" y="36.68" width="2.6639999999999997" height="12.58" fill="#a88064"/><path d="M28 49 L40 47 L42 50 L30 51Z" fill="#3a3e48" opacity=".7"/><path d="M48 49 L62 48 L62 51 L50 51Z" fill="#3a3e48" opacity=".7"/></svg>
<div class="t" style="left:364.75px;width:120px;text-align:center;top:707.7px;font-size:11px;letter-spacing:.6px;color:#1a1a1a">IMGP8721.jpg</div>
<div class="a" style="left:484.5px;top:622px;width:88.5px;height:61px;background:#fff;box-shadow:0 0 0 .5px rgba(0,0,0,.12),0 1px 2px rgba(0,0,0,.22)"></div>
<svg class="a" style="left:489.5px;top:627.5px;box-shadow:0 0 0 .7px #74746e;filter:blur(.4px)" width="79" height="51" viewBox="0 0 80 52" preserveAspectRatio="none"><rect width="80" height="52" fill="url(#gnd3)"/><rect width="80" height="24" fill="url(#sky3)"/><ellipse cx="75" cy="3" rx="9" ry="2.4" fill="#dde5ec" opacity=".5"/><ellipse cx="77" cy="10" rx="5" ry="1.8" fill="#d8e0e8" opacity=".3"/><rect x="0" y="20" width="80" height="4" fill="#9fafc2" opacity=".55"/><rect x="0" y="23" width="80" height="6" fill="#b7b2a3"/><rect x="14" y="25" width="8" height="2.5" fill="#cfc9bc"/><rect x="21" y="24" width="8" height="3" fill="#ece9e2"/><rect x="29" y="24.5" width="5" height="2.5" fill="#f1eee8"/><rect x="34" y="25.5" width="5" height="2" fill="#8d8170"/><rect x="40" y="25" width="9" height="2.5" fill="#a3927a"/><rect x="49" y="25.5" width="5" height="2" fill="#7c7262"/><rect x="55" y="24.5" width="7" height="3" fill="#c9c3b8"/><rect x="63" y="25" width="6" height="2" fill="#8f8676"/><rect x="70" y="24.5" width="7" height="2.5" fill="#dcd8d0"/><rect x="77" y="25" width="3" height="2" fill="#a89e8e"/><path d="M27 24 l3 -4 l1 0 l-1 4Z M38 24 l2 -3 l1 0 l-1 3Z M52 24 l2 -4 l1 0 l-1 4Z M66 24 l2 -3 l1 0 l-1 3Z" fill="#6f6c68" opacity=".4"/><rect x="0" y="29" width="80" height="4" fill="#c3c2b8" opacity=".7"/><rect x="0" y="32" width="80" height="20" fill="url(#gnd3)" opacity=".85"/><ellipse cx="35.16" cy="21.08" rx="1.296" ry="1.17" fill="#3a4a80"/><rect x="33" y="22.16" width="4.32" height="6.4799999999999995" rx="1.08" fill="#e1e1dc"/><rect x="33.3456" y="28.28" width="3.6288" height="3.6" fill="#2e2e2a"/><rect x="33.5184" y="31.52" width="1.296" height="6.12" fill="#5a554c"/><rect x="35.5056" y="31.52" width="1.296" height="6.12" fill="#5a554c"/><ellipse cx="58.04" cy="22.02" rx="1.224" ry="1.105" fill="#c05a5a"/><rect x="56" y="23.04" width="4.08" height="6.12" rx="1.02" fill="#c28e74"/><rect x="56.3264" y="28.82" width="3.4272" height="3.4000000000000004" fill="#8c7660"/><rect x="56.4896" y="31.880000000000003" width="1.224" height="5.78" fill="#a58064"/><rect x="58.3664" y="31.880000000000003" width="1.224" height="5.78" fill="#a58064"/></svg>
<div class="t" style="left:468.75px;width:120px;text-align:center;top:707.7px;font-size:11px;letter-spacing:.6px;color:#1a1a1a">IMGP8722.jpg</div>
<div class="a" style="left:588.5px;top:622px;width:88.5px;height:61px;background:#fff;box-shadow:0 0 0 .5px rgba(0,0,0,.12),0 1px 2px rgba(0,0,0,.22)"></div>
<svg class="a" style="left:593.5px;top:627.5px;box-shadow:0 0 0 .7px #74746e;filter:blur(.4px)" width="79" height="51" viewBox="0 0 80 52" preserveAspectRatio="none"><rect width="80" height="52" fill="url(#gnd3)"/><rect width="80" height="24" fill="url(#sky3)"/><ellipse cx="75" cy="3" rx="9" ry="2.4" fill="#dde5ec" opacity=".5"/><ellipse cx="77" cy="10" rx="5" ry="1.8" fill="#d8e0e8" opacity=".3"/><rect x="0" y="20" width="80" height="4" fill="#9fafc2" opacity=".55"/><rect x="0" y="23" width="80" height="6" fill="#b7b2a3"/><rect x="14" y="25" width="8" height="2.5" fill="#cfc9bc"/><rect x="21" y="24" width="8" height="3" fill="#ece9e2"/><rect x="29" y="24.5" width="5" height="2.5" fill="#f1eee8"/><rect x="34" y="25.5" width="5" height="2" fill="#8d8170"/><rect x="40" y="25" width="9" height="2.5" fill="#a3927a"/><rect x="49" y="25.5" width="5" height="2" fill="#7c7262"/><rect x="55" y="24.5" width="7" height="3" fill="#c9c3b8"/><rect x="63" y="25" width="6" height="2" fill="#8f8676"/><rect x="70" y="24.5" width="7" height="2.5" fill="#dcd8d0"/><rect x="77" y="25" width="3" height="2" fill="#a89e8e"/><path d="M27 24 l3 -4 l1 0 l-1 4Z M38 24 l2 -3 l1 0 l-1 3Z M52 24 l2 -4 l1 0 l-1 4Z M66 24 l2 -3 l1 0 l-1 3Z" fill="#6f6c68" opacity=".4"/><rect x="0" y="29" width="80" height="4" fill="#c3c2b8" opacity=".7"/><rect x="0" y="32" width="80" height="20" fill="url(#gnd3)" opacity=".85"/><ellipse cx="39.32" cy="23.66" rx="0.7919999999999999" ry="0.7150000000000001" fill="#2e2a26"/><rect x="38" y="24.32" width="2.6399999999999997" height="3.96" rx="0.6599999999999999" fill="#8c7a68"/><rect x="38.2112" y="28.060000000000002" width="2.2175999999999996" height="2.2" fill="#3a3a36"/><rect x="38.3168" y="30.04" width="0.7919999999999999" height="3.74" fill="#b88b70"/><rect x="39.5312" y="30.04" width="0.7919999999999999" height="3.74" fill="#b88b70"/><ellipse cx="56.32" cy="22.66" rx="0.7919999999999999" ry="0.7150000000000001" fill="#2e2a26"/><rect x="55" y="23.32" width="2.6399999999999997" height="3.96" rx="0.6599999999999999" fill="#a26a54"/><rect x="55.2112" y="27.060000000000002" width="2.2175999999999996" height="2.2" fill="#8a6a54"/><rect x="55.3168" y="29.04" width="0.7919999999999999" height="3.74" fill="#b88b70"/><rect x="56.5312" y="29.04" width="0.7919999999999999" height="3.74" fill="#b88b70"/></svg>
<div class="t" style="left:572.75px;width:120px;text-align:center;top:707.7px;font-size:11px;letter-spacing:.6px;color:#1a1a1a">IMGP8723.jpg</div>
<div class="a" style="left:692.5px;top:622px;width:88.5px;height:61px;background:#fff;box-shadow:0 0 0 .5px rgba(0,0,0,.12),0 1px 2px rgba(0,0,0,.22)"></div>
<svg class="a" style="left:697.5px;top:627.5px;box-shadow:0 0 0 .7px #74746e;filter:blur(.4px)" width="79" height="51" viewBox="0 0 80 52" preserveAspectRatio="none"><rect width="80" height="52" fill="url(#gnd3)"/><rect width="80" height="24" fill="url(#sky3)"/><ellipse cx="75" cy="3" rx="9" ry="2.4" fill="#dde5ec" opacity=".5"/><ellipse cx="77" cy="10" rx="5" ry="1.8" fill="#d8e0e8" opacity=".3"/><rect x="0" y="20" width="80" height="4" fill="#9fafc2" opacity=".55"/><rect x="0" y="23" width="80" height="6" fill="#b7b2a3"/><rect x="14" y="25" width="8" height="2.5" fill="#cfc9bc"/><rect x="21" y="24" width="8" height="3" fill="#ece9e2"/><rect x="29" y="24.5" width="5" height="2.5" fill="#f1eee8"/><rect x="34" y="25.5" width="5" height="2" fill="#8d8170"/><rect x="40" y="25" width="9" height="2.5" fill="#a3927a"/><rect x="49" y="25.5" width="5" height="2" fill="#7c7262"/><rect x="55" y="24.5" width="7" height="3" fill="#c9c3b8"/><rect x="63" y="25" width="6" height="2" fill="#8f8676"/><rect x="70" y="24.5" width="7" height="2.5" fill="#dcd8d0"/><rect x="77" y="25" width="3" height="2" fill="#a89e8e"/><path d="M27 24 l3 -4 l1 0 l-1 4Z M38 24 l2 -3 l1 0 l-1 3Z M52 24 l2 -4 l1 0 l-1 4Z M66 24 l2 -3 l1 0 l-1 3Z" fill="#6f6c68" opacity=".4"/><rect x="0" y="29" width="80" height="4" fill="#c3c2b8" opacity=".7"/><rect x="0" y="32" width="80" height="20" fill="url(#gnd3)" opacity=".85"/><ellipse cx="42.96" cy="23.48" rx="0.576" ry="0.52" fill="#2e2a26"/><rect x="42" y="23.96" width="1.92" height="2.88" rx="0.48" fill="#6a5a4c"/><rect x="42.1536" y="26.68" width="1.6127999999999998" height="1.6" fill="#3a3a36"/><rect x="42.2304" y="28.12" width="0.576" height="2.72" fill="#b88b70"/><rect x="43.1136" y="28.12" width="0.576" height="2.72" fill="#b88b70"/><ellipse cx="58.96" cy="22.48" rx="0.576" ry="0.52" fill="#2e2a26"/><rect x="58" y="22.96" width="1.92" height="2.88" rx="0.48" fill="#8c7050"/><rect x="58.1536" y="25.68" width="1.6127999999999998" height="1.6" fill="#6a5a4a"/><rect x="58.2304" y="27.12" width="0.576" height="2.72" fill="#b88b70"/><rect x="59.1136" y="27.12" width="0.576" height="2.72" fill="#b88b70"/></svg>
<div class="t" style="left:676.75px;width:120px;text-align:center;top:707.7px;font-size:11px;letter-spacing:.6px;color:#1a1a1a">IMGP8724.jpg</div>
<div class="a" style="left:796.5px;top:622px;width:88.5px;height:61px;background:#fff;box-shadow:0 0 0 .5px rgba(0,0,0,.12),0 1px 2px rgba(0,0,0,.22)"></div>
<svg class="a" style="left:801.5px;top:627.5px;box-shadow:0 0 0 .7px #74746e;filter:blur(.4px)" width="79" height="51" viewBox="0 0 80 52" preserveAspectRatio="none"><rect width="80" height="52" fill="url(#gnd3)"/><rect width="80" height="24" fill="url(#sky3)"/><ellipse cx="75" cy="3" rx="9" ry="2.4" fill="#dde5ec" opacity=".5"/><ellipse cx="77" cy="10" rx="5" ry="1.8" fill="#d8e0e8" opacity=".3"/><rect x="0" y="20" width="80" height="4" fill="#9fafc2" opacity=".55"/><rect x="0" y="23" width="80" height="6" fill="#b7b2a3"/><rect x="14" y="25" width="8" height="2.5" fill="#cfc9bc"/><rect x="21" y="24" width="8" height="3" fill="#ece9e2"/><rect x="29" y="24.5" width="5" height="2.5" fill="#f1eee8"/><rect x="34" y="25.5" width="5" height="2" fill="#8d8170"/><rect x="40" y="25" width="9" height="2.5" fill="#a3927a"/><rect x="49" y="25.5" width="5" height="2" fill="#7c7262"/><rect x="55" y="24.5" width="7" height="3" fill="#c9c3b8"/><rect x="63" y="25" width="6" height="2" fill="#8f8676"/><rect x="70" y="24.5" width="7" height="2.5" fill="#dcd8d0"/><rect x="77" y="25" width="3" height="2" fill="#a89e8e"/><path d="M27 24 l3 -4 l1 0 l-1 4Z M38 24 l2 -3 l1 0 l-1 3Z M52 24 l2 -4 l1 0 l-1 4Z M66 24 l2 -3 l1 0 l-1 3Z" fill="#6f6c68" opacity=".4"/><rect x="0" y="29" width="80" height="4" fill="#c3c2b8" opacity=".7"/><rect x="0" y="32" width="80" height="20" fill="url(#gnd3)" opacity=".85"/><ellipse cx="44.72" cy="25.36" rx="0.432" ry="0.39" fill="#2e2a26"/><rect x="44" y="25.72" width="1.44" height="2.16" rx="0.36" fill="#6a5a4c"/><rect x="44.1152" y="27.76" width="1.2096" height="1.2000000000000002" fill="#3a3a36"/><rect x="44.1728" y="28.84" width="0.432" height="2.04" fill="#b88b70"/><rect x="44.8352" y="28.84" width="0.432" height="2.04" fill="#b88b70"/></svg>
<div class="t" style="left:780.75px;width:120px;text-align:center;top:707.7px;font-size:11px;letter-spacing:.6px;color:#1a1a1a">IMGP8725.jpg</div>
<div class="a" style="left:900.5px;top:622px;width:88.5px;height:61px;background:#fff;box-shadow:0 0 0 .5px rgba(0,0,0,.12),0 1px 2px rgba(0,0,0,.22)"></div>
<svg class="a" style="left:905.5px;top:627.5px;box-shadow:0 0 0 .7px #74746e;filter:blur(.4px)" width="79" height="51" viewBox="0 0 80 52" preserveAspectRatio="none"><rect width="80" height="52" fill="url(#gnd3)"/><rect width="80" height="24" fill="url(#sky3)"/><ellipse cx="75" cy="3" rx="9" ry="2.4" fill="#dde5ec" opacity=".5"/><ellipse cx="77" cy="10" rx="5" ry="1.8" fill="#d8e0e8" opacity=".3"/><rect x="0" y="20" width="80" height="4" fill="#9fafc2" opacity=".55"/><rect x="0" y="23" width="80" height="6" fill="#b7b2a3"/><rect x="14" y="25" width="8" height="2.5" fill="#cfc9bc"/><rect x="21" y="24" width="8" height="3" fill="#ece9e2"/><rect x="29" y="24.5" width="5" height="2.5" fill="#f1eee8"/><rect x="34" y="25.5" width="5" height="2" fill="#8d8170"/><rect x="40" y="25" width="9" height="2.5" fill="#a3927a"/><rect x="49" y="25.5" width="5" height="2" fill="#7c7262"/><rect x="55" y="24.5" width="7" height="3" fill="#c9c3b8"/><rect x="63" y="25" width="6" height="2" fill="#8f8676"/><rect x="70" y="24.5" width="7" height="2.5" fill="#dcd8d0"/><rect x="77" y="25" width="3" height="2" fill="#a89e8e"/><path d="M27 24 l3 -4 l1 0 l-1 4Z M38 24 l2 -3 l1 0 l-1 3Z M52 24 l2 -4 l1 0 l-1 4Z M66 24 l2 -3 l1 0 l-1 3Z" fill="#6f6c68" opacity=".4"/><rect x="0" y="29" width="80" height="4" fill="#c3c2b8" opacity=".7"/><rect x="0" y="32" width="80" height="20" fill="url(#gnd3)" opacity=".85"/><ellipse cx="50.6" cy="25.3" rx="0.36" ry="0.325" fill="#2e2a26"/><rect x="50" y="25.6" width="1.2" height="1.7999999999999998" rx="0.3" fill="#6a5a4c"/><rect x="50.096" y="27.3" width="1.008" height="1.0" fill="#3a3a36"/><rect x="50.144" y="28.2" width="0.36" height="1.7000000000000002" fill="#b88b70"/><rect x="50.696" y="28.2" width="0.36" height="1.7000000000000002" fill="#b88b70"/></svg>
<div class="t" style="left:884.75px;width:120px;text-align:center;top:707.7px;font-size:11px;letter-spacing:.6px;color:#1a1a1a">IMGP8726.jpg</div>
<div class="a" style="left:1004.5px;top:622px;width:88.5px;height:61px;background:#fff;box-shadow:0 0 0 .5px rgba(0,0,0,.12),0 1px 2px rgba(0,0,0,.22)"></div>
<svg class="a" style="left:1009.5px;top:627.5px;box-shadow:0 0 0 .7px #74746e;filter:blur(.4px)" width="79" height="51" viewBox="0 0 80 52" preserveAspectRatio="none"><rect width="80" height="52" fill="url(#gnd3)"/><rect width="80" height="24" fill="url(#sky3)"/><ellipse cx="75" cy="3" rx="9" ry="2.4" fill="#dde5ec" opacity=".5"/><ellipse cx="77" cy="10" rx="5" ry="1.8" fill="#d8e0e8" opacity=".3"/><rect x="0" y="20" width="80" height="4" fill="#9fafc2" opacity=".55"/><rect x="0" y="23" width="80" height="6" fill="#b7b2a3"/><rect x="14" y="25" width="8" height="2.5" fill="#cfc9bc"/><rect x="21" y="24" width="8" height="3" fill="#ece9e2"/><rect x="29" y="24.5" width="5" height="2.5" fill="#f1eee8"/><rect x="34" y="25.5" width="5" height="2" fill="#8d8170"/><rect x="40" y="25" width="9" height="2.5" fill="#a3927a"/><rect x="49" y="25.5" width="5" height="2" fill="#7c7262"/><rect x="55" y="24.5" width="7" height="3" fill="#c9c3b8"/><rect x="63" y="25" width="6" height="2" fill="#8f8676"/><rect x="70" y="24.5" width="7" height="2.5" fill="#dcd8d0"/><rect x="77" y="25" width="3" height="2" fill="#a89e8e"/><path d="M27 24 l3 -4 l1 0 l-1 4Z M38 24 l2 -3 l1 0 l-1 3Z M52 24 l2 -4 l1 0 l-1 4Z M66 24 l2 -3 l1 0 l-1 3Z" fill="#6f6c68" opacity=".4"/><rect x="0" y="29" width="80" height="4" fill="#c3c2b8" opacity=".7"/><rect x="0" y="32" width="80" height="20" fill="url(#gnd3)" opacity=".85"/><ellipse cx="40.6" cy="26.3" rx="0.36" ry="0.325" fill="#2e2a26"/><rect x="40" y="26.6" width="1.2" height="1.7999999999999998" rx="0.3" fill="#6a5a4c"/><rect x="40.096" y="28.3" width="1.008" height="1.0" fill="#3a3a36"/><rect x="40.144" y="29.2" width="0.36" height="1.7000000000000002" fill="#b88b70"/><rect x="40.696" y="29.2" width="0.36" height="1.7000000000000002" fill="#b88b70"/><ellipse cx="52.6" cy="26.3" rx="0.36" ry="0.325" fill="#2e2a26"/><rect x="52" y="26.6" width="1.2" height="1.7999999999999998" rx="0.3" fill="#6a5a4c"/><rect x="52.096" y="28.3" width="1.008" height="1.0" fill="#3a3a36"/><rect x="52.144" y="29.2" width="0.36" height="1.7000000000000002" fill="#b88b70"/><rect x="52.696" y="29.2" width="0.36" height="1.7000000000000002" fill="#b88b70"/></svg>
<div class="t" style="left:988.75px;width:120px;text-align:center;top:707.7px;font-size:11px;letter-spacing:.6px;color:#1a1a1a">IMGP8727.jpg</div>
<div class="a" style="left:1108.5px;top:622px;width:88.5px;height:61px;background:#fff;box-shadow:0 0 0 .5px rgba(0,0,0,.12),0 1px 2px rgba(0,0,0,.22)"></div>
<svg class="a" style="left:1113.5px;top:627.5px;box-shadow:0 0 0 .7px #74746e;filter:blur(.4px)" width="79" height="51" viewBox="0 0 80 52" preserveAspectRatio="none"><rect width="80" height="52" fill="url(#gnd3)"/><rect width="80" height="24" fill="url(#sky3)"/><ellipse cx="75" cy="3" rx="9" ry="2.4" fill="#dde5ec" opacity=".5"/><ellipse cx="77" cy="10" rx="5" ry="1.8" fill="#d8e0e8" opacity=".3"/><rect x="0" y="20" width="80" height="4" fill="#9fafc2" opacity=".55"/><rect x="0" y="23" width="80" height="6" fill="#b7b2a3"/><rect x="14" y="25" width="8" height="2.5" fill="#cfc9bc"/><rect x="21" y="24" width="8" height="3" fill="#ece9e2"/><rect x="29" y="24.5" width="5" height="2.5" fill="#f1eee8"/><rect x="34" y="25.5" width="5" height="2" fill="#8d8170"/><rect x="40" y="25" width="9" height="2.5" fill="#a3927a"/><rect x="49" y="25.5" width="5" height="2" fill="#7c7262"/><rect x="55" y="24.5" width="7" height="3" fill="#c9c3b8"/><rect x="63" y="25" width="6" height="2" fill="#8f8676"/><rect x="70" y="24.5" width="7" height="2.5" fill="#dcd8d0"/><rect x="77" y="25" width="3" height="2" fill="#a89e8e"/><path d="M27 24 l3 -4 l1 0 l-1 4Z M38 24 l2 -3 l1 0 l-1 3Z M52 24 l2 -4 l1 0 l-1 4Z M66 24 l2 -3 l1 0 l-1 3Z" fill="#6f6c68" opacity=".4"/><rect x="0" y="29" width="80" height="4" fill="#c3c2b8" opacity=".7"/><rect x="0" y="32" width="80" height="20" fill="url(#gnd3)" opacity=".85"/><ellipse cx="47.72" cy="25.36" rx="0.432" ry="0.39" fill="#2e2a26"/><rect x="47" y="25.72" width="1.44" height="2.16" rx="0.36" fill="#5a4a3c"/><rect x="47.1152" y="27.76" width="1.2096" height="1.2000000000000002" fill="#3a3a36"/><rect x="47.1728" y="28.84" width="0.432" height="2.04" fill="#b88b70"/><rect x="47.8352" y="28.84" width="0.432" height="2.04" fill="#b88b70"/><ellipse cx="56.72" cy="25.36" rx="0.432" ry="0.39" fill="#2e2a26"/><rect x="56" y="25.72" width="1.44" height="2.16" rx="0.36" fill="#5a4a3c"/><rect x="56.1152" y="27.76" width="1.2096" height="1.2000000000000002" fill="#3a3a36"/><rect x="56.1728" y="28.84" width="0.432" height="2.04" fill="#b88b70"/><rect x="56.8352" y="28.84" width="0.432" height="2.04" fill="#b88b70"/></svg>
<div class="t" style="left:1092.75px;width:120px;text-align:center;top:707.7px;font-size:11px;letter-spacing:.6px;color:#1a1a1a">IMGP8728.jpg</div>
</body></html>
